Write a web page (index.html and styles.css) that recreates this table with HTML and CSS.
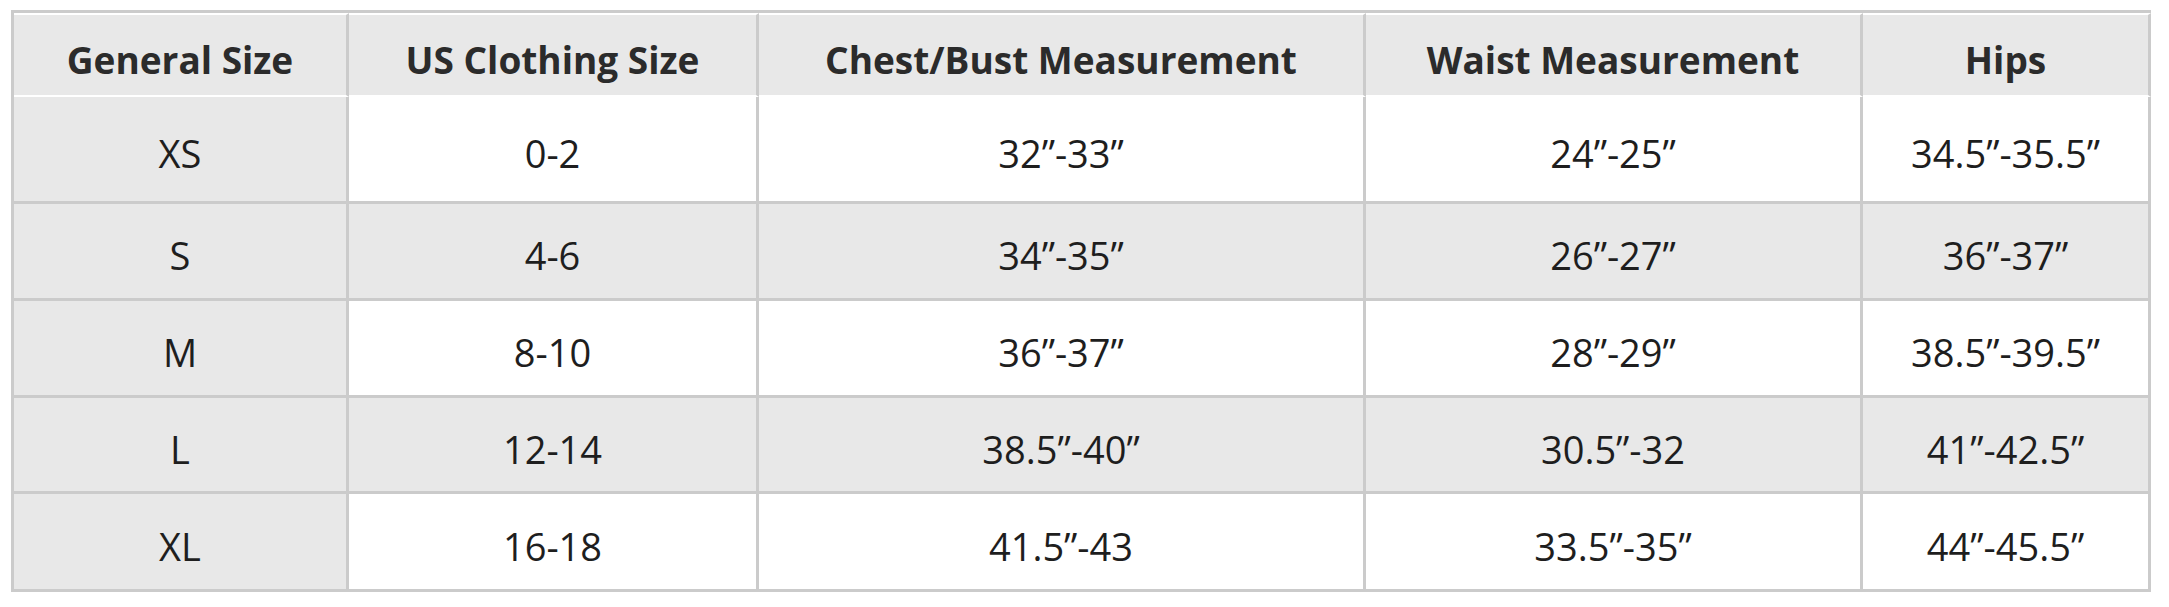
FILE: index.html
```html
<!DOCTYPE html>
<html lang="en">
<head>
<meta charset="utf-8">
<title>Size Chart</title>
<link rel="stylesheet" href="styles.css">
</head>
<body>
<div class="chart" role="table">
  <div class="cell head shade">General Size</div>
  <div class="cell head shade">US Clothing Size</div>
  <div class="cell head shade">Chest/Bust Measurement</div>
  <div class="cell head shade">Waist Measurement</div>
  <div class="cell head shade">Hips</div>

  <div class="cell shade">XS</div>
  <div class="cell">0-2</div>
  <div class="cell">32”-33”</div>
  <div class="cell">24”-25”</div>
  <div class="cell">34.5”-35.5”</div>

  <div class="cell shade">S</div>
  <div class="cell shade">4-6</div>
  <div class="cell shade">34”-35”</div>
  <div class="cell shade">26”-27”</div>
  <div class="cell shade">36”-37”</div>

  <div class="cell shade">M</div>
  <div class="cell">8-10</div>
  <div class="cell">36”-37”</div>
  <div class="cell">28”-29”</div>
  <div class="cell">38.5”-39.5”</div>

  <div class="cell shade">L</div>
  <div class="cell shade">12-14</div>
  <div class="cell shade">38.5”-40”</div>
  <div class="cell shade">30.5”-32</div>
  <div class="cell shade">41”-42.5”</div>

  <div class="cell shade">XL</div>
  <div class="cell">16-18</div>
  <div class="cell">41.5”-43</div>
  <div class="cell">33.5”-35”</div>
  <div class="cell">44”-45.5”</div>
</div>
</body>
</html>
```

FILE: styles.css
```css
html, body {
  margin: 0;
  padding: 0;
  background: #ffffff;
}

.chart {
  display: grid;
  grid-template-columns: 335px 410px 607px 497px 288px;
  grid-template-rows: 84px 107px 97px 97px 96px 98px;
  width: max-content;
  margin: 10px 0 0 11px;
  border-left: 3px solid #cbcbcb;
  border-top: 3px solid #cbcbcb;
  font-family: "Open Sans", "Liberation Sans", sans-serif;
  font-size: 38px;
  color: #1e1e1e;
}

.cell {
  box-sizing: border-box;
  display: flex;
  align-items: center;
  justify-content: center;
  padding-top: 8px;
  border-right: 3px solid #cbcbcb;
  border-bottom: 3px solid #cbcbcb;
  background: #ffffff;
  white-space: nowrap;
}

.shade {
  background: #e8e8e8;
}

.head {
  font-size: 37px;
  font-weight: 700;
  color: #2b2b2b;
  border-top: 2px solid #ffffff;
  border-bottom: 2px solid #ffffff;
}
```
